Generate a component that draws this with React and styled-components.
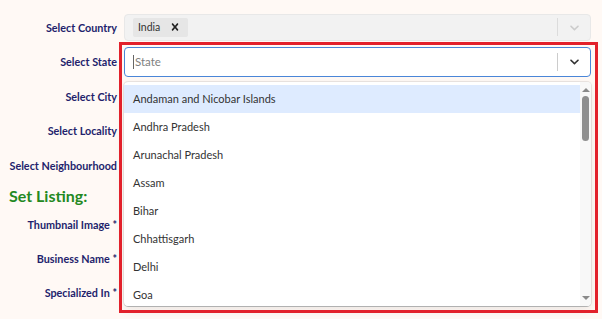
import React from 'react'
import styled, { createGlobalStyle } from 'styled-components'

const GlobalStyle = createGlobalStyle`
  html, body {
    margin: 0;
    background: #fff9f5;
    font-family: Lato, "Noto Sans", sans-serif;
  }
  * { box-sizing: border-box; }
`

const Page = styled.div`
  padding: 10px 11px 0 0;
  width: 602px;
  height: 319px;
  overflow: hidden;
`

const FieldRow = styled.div`
  display: grid;
  grid-template-columns: 117px 1fr;
  column-gap: 7px;
  align-items: center;
  height: ${({ h }) => h || 34.5}px;
`

const Label = styled.label`
  text-align: right;
  font-size: 10.8px;
  font-weight: 700;
  color: #231f6c;
  white-space: nowrap;
`

const Heading = styled.h3`
  margin: 0;
  height: 25px;
  display: flex;
  align-items: center;
  padding-left: 9px;
  font-size: 16px;
  font-weight: 700;
  color: #23891f;
`

const Control = styled.div`
  display: flex;
  align-items: center;
  height: ${({ h }) => h || 28}px;
  background: ${({ disabled }) => (disabled ? '#f2f2f2' : '#fff')};
  border: ${({ focused }) => (focused ? '1.5px solid' : '1px solid')};
  border-color: ${({ focused, disabled }) => (focused ? '#4a86d8' : disabled ? '#e8e8e8' : '#cccccc')};
  border-radius: 4px;
  padding-left: 8px;
`

const ValueArea = styled.div`
  flex: 1;
  display: flex;
  align-items: center;
  gap: 1px;
  font-size: 11.5px;
  color: #808080;
`

const Caret = styled.span`
  width: 1px;
  height: 14px;
  background: #666;
`

const Tag = styled.div`
  display: flex;
  align-items: center;
  height: 19px;
  background: #e6e6e6;
  border-radius: 2px;
  padding: 0 6px 0 5px;
  gap: 8px;
  font-size: 10.5px;
  color: #333;
`

const Indicators = styled.div`
  display: flex;
  align-items: center;
  height: 100%;
`

const Separator = styled.span`
  width: 1px;
  height: 18px;
  background: ${({ light }) => (light ? '#dcdcdc' : '#cccccc')};
`

const IndicatorBtn = styled.div`
  width: 32px;
  display: flex;
  align-items: center;
  justify-content: center;
  color: ${({ light }) => (light ? '#cccccc' : '#333')};
`

const Anchor = styled.div`
  position: relative;
  z-index: 2;
`

const Highlight = styled.div`
  position: absolute;
  top: -5px;
  left: -5px;
  right: -7px;
  height: 271px;
  border: 3px solid #e2212b;
  pointer-events: none;
`

const Menu = styled.div`
  position: absolute;
  top: calc(100% + 5px);
  left: 0;
  right: 0;
  height: 224px;
  display: flex;
  background: #fff;
  border-radius: 4px;
  box-shadow: 0 0 0 1px rgba(0, 0, 0, 0.08), 0 4px 11px rgba(0, 0, 0, 0.08);
  overflow: hidden;
`

const OptionList = styled.div`
  flex: 1;
  padding-top: 3px;
  overflow: hidden;
`

const Option = styled.div`
  height: 28px;
  display: flex;
  align-items: center;
  padding-left: 9px;
  font-size: 11px;
  color: #333;
  background: ${({ active }) => (active ? '#deebff' : 'transparent')};
`

const Scrollbar = styled.div`
  width: 11px;
  display: flex;
  flex-direction: column;
  align-items: center;
  background: #f8f8f8;
  padding: 6px 0 6px;
`

const Thumb = styled.div`
  width: 7px;
  height: 45px;
  margin-top: 4px;
  border-radius: 4px;
  background: #8f8f8f;
`

const Arrow = styled.div`
  width: 0;
  height: 0;
  border-left: 4px solid transparent;
  border-right: 4px solid transparent;
  ${({ down }) => (down ? 'border-top: 4px solid #8a8a8a;' : 'border-bottom: 4px solid #8a8a8a;')}
  margin-top: ${({ down }) => (down ? 'auto' : '0')};
`

const Chevron = () => (
  <svg width="15" height="15" viewBox="0 0 20 20" fill="currentColor">
    <path d="M4.516 7.548c0.436-0.446 1.043-0.481 1.576 0l3.908 3.747 3.908-3.747c0.533-0.481 1.141-0.446 1.574 0 0.436 0.445 0.408 1.197 0 1.615-0.406 0.418-4.695 4.502-4.695 4.502-0.217 0.223-0.502 0.335-0.787 0.335s-0.57-0.112-0.789-0.335c0 0-4.287-4.084-4.695-4.502s-0.436-1.17 0-1.615z" />
  </svg>
)

const Cross = () => (
  <svg width="14" height="14" viewBox="0 0 20 20" fill="#222">
    <path d="M14.348 14.849c-0.469 0.469-1.229 0.469-1.697 0l-2.651-3.030-2.651 3.029c-0.469 0.469-1.229 0.469-1.697 0-0.469-0.469-0.469-1.229 0-1.697l2.758-3.15-2.759-3.152c-0.469-0.469-0.469-1.228 0-1.697s1.228-0.469 1.697 0l2.652 3.031 2.651-3.031c0.469-0.469 1.228-0.469 1.697 0s0.469 1.229 0 1.697l-2.758 3.152 2.758 3.15c0.469 0.469 0.469 1.229 0 1.698z" />
  </svg>
)

const states = [
  'Andaman and Nicobar Islands',
  'Andhra Pradesh',
  'Arunachal Pradesh',
  'Assam',
  'Bihar',
  'Chhattisgarh',
  'Delhi',
  'Goa',
]

const EmptySelect = () => (
  <Control>
    <ValueArea />
    <Indicators>
      <Separator />
      <IndicatorBtn><Chevron /></IndicatorBtn>
    </Indicators>
  </Control>
)

export default function App() {
  return (
    <Page>
      <GlobalStyle />
      <FieldRow>
        <Label>Select Country</Label>
        <Control disabled h={27}>
          <ValueArea>
            <Tag>India <Cross /></Tag>
          </ValueArea>
          <Indicators>
            <Separator light />
            <IndicatorBtn light><Chevron /></IndicatorBtn>
          </Indicators>
        </Control>
      </FieldRow>

      <FieldRow>
        <Label>Select State</Label>
        <Anchor>
          <Control focused h={30}>
            <ValueArea>
              <Caret />
              State
            </ValueArea>
            <Indicators>
              <Separator />
              <IndicatorBtn><Chevron /></IndicatorBtn>
            </Indicators>
          </Control>
          <Menu>
            <OptionList>
              {states.map((s, i) => (
                <Option key={s} active={i === 0}>{s}</Option>
              ))}
            </OptionList>
            <Scrollbar>
              <Arrow />
              <Thumb />
              <Arrow down />
            </Scrollbar>
          </Menu>
          <Highlight />
        </Anchor>
      </FieldRow>

      <FieldRow>
        <Label>Select City</Label>
        <EmptySelect />
      </FieldRow>
      <FieldRow>
        <Label>Select Locality</Label>
        <EmptySelect />
      </FieldRow>
      <FieldRow>
        <Label>Select Neighbourhood</Label>
        <EmptySelect />
      </FieldRow>

      <Heading>Set Listing:</Heading>

      <FieldRow h={34}>
        <Label>Thumbnail Image *</Label>
        <Control />
      </FieldRow>
      <FieldRow h={34}>
        <Label>Business Name *</Label>
        <Control />
      </FieldRow>
      <FieldRow h={34}>
        <Label>Specialized In *</Label>
        <Control />
      </FieldRow>
    </Page>
  )
}
